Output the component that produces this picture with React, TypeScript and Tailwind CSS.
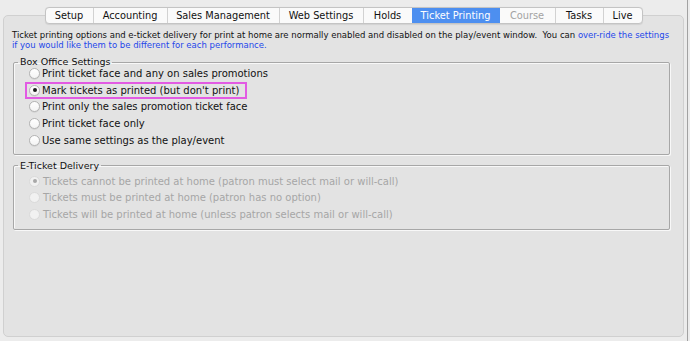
import React from 'react';

const tabs: { label: string; w: string; active?: boolean; disabled?: boolean }[] = [
  { label: 'Setup', w: 'w-[47px]' },
  { label: 'Accounting', w: 'w-[74px]' },
  { label: 'Sales Management', w: 'w-[112px]' },
  { label: 'Web Settings', w: 'w-[84px]' },
  { label: 'Holds', w: 'w-[49px]' },
  { label: 'Ticket Printing', w: 'w-[88px]', active: true },
  { label: 'Course', w: 'w-[55px]', disabled: true },
  { label: 'Tasks', w: 'w-[48px]' },
  { label: 'Live', w: 'w-[39px]' },
];

const boxOffice = [
  'Print ticket face and any on sales promotions',
  "Mark tickets as printed (but don't print)",
  'Print only the sales promotion ticket face',
  'Print ticket face only',
  'Use same settings as the play/event',
];

const delivery = [
  'Tickets cannot be printed at home (patron must select mail or will-call)',
  'Tickets must be printed at home (patron has no option)',
  'Tickets will be printed at home (unless patron selects mail or will-call)',
];

const Radio = ({ checked, disabled }: { checked?: boolean; disabled?: boolean }) => (
  <span
    className={
      'flex h-[11px] w-[11px] shrink-0 items-center justify-center rounded-full border ' +
      (disabled
        ? 'border-[#dadada] bg-[#f1f1f1]'
        : 'border-[#b4b4b4] bg-gradient-to-b from-white to-[#f4f4f4] shadow-[0_0.5px_0.5px_rgba(0,0,0,0.12)]')
    }
  >
    {checked && (
      <span className={'h-[4px] w-[4px] rounded-full ' + (disabled ? 'bg-[#a8a8a8]' : 'bg-[#1a1a1a]')} />
    )}
  </span>
);

export default function App() {
  return (
    <div className="relative flex h-[341px] w-[690px] overflow-hidden bg-[#ececec] font-['DejaVu_Sans',sans-serif] text-[#111]">
      <div className="flex w-[684px] flex-col pl-[3px] pt-[7px]">
        {/* segmented tab bar */}
        <div className="relative z-10 flex h-[17px] justify-center">
          <div className="flex rounded-[4px] border border-[#c4c4c4] bg-[#fafafa] shadow-[0_0.5px_1px_rgba(0,0,0,0.08)]">
            {tabs.map((t, i) => (
              <div
                key={t.label}
                className={
                  'flex items-center justify-center text-[9.8px] leading-none ' +
                  t.w +
                  (i > 0 && !t.active && !tabs[i - 1].active ? ' border-l border-[#d2d2d2]' : '') +
                  (t.active ? ' bg-[#4d8ff0] text-white' : t.disabled ? ' text-[#a3a3a3]' : ' text-[#111]')
                }
              >
                {t.label}
              </div>
            ))}
          </div>
        </div>

        {/* tab content panel */}
        <div className="-mt-[9px] flex h-[322px] w-[681px] flex-col rounded-[5px] border border-[#d0d0d0] bg-[#e3e3e3] pl-[8px] pt-[14px]">
          <p className="text-[8.5px] leading-[10px]">
            Ticket printing options and e-ticket delivery for print at home are normally enabled and disabled on the
            play/event window.&nbsp; You can <span className="text-[#1f48ea]">over-ride the settings</span>
            <br />
            <span className="text-[#1f48ea]">if you would like them to be different for each performance.</span>
          </p>

          <fieldset className="mt-[7px] ml-[1px] w-[657px] rounded-[2px] border border-[#a7a7a7] pb-[5px] shadow-[inset_1px_1px_0_#f8f8f8,1px_1px_0_#f8f8f8]">
            <legend className="ml-[4px] px-[2px] text-[9.5px] leading-[10px]">Box Office Settings</legend>
            <div className="-mt-[2px] flex flex-col">
              {boxOffice.map((label, i) => (
                <div key={label} className="relative flex h-[16.75px] items-center gap-[2px] pl-[15px] text-[10px]">
                  <Radio checked={i === 1} />
                  <span>{label}</span>
                  {i === 1 && (
                    <span className="pointer-events-none absolute left-[11px] top-0 h-[17px] w-[222px] border-2 border-[#e25be3]" />
                  )}
                </div>
              ))}
            </div>
          </fieldset>

          <fieldset className="mt-[6px] ml-[1px] w-[657px] rounded-[2px] border border-[#a7a7a7] pb-[6px] shadow-[inset_1px_1px_0_#f8f8f8,1px_1px_0_#f8f8f8]">
            <legend className="ml-[4px] px-[2px] text-[9.5px] leading-[10px]">E-Ticket Delivery</legend>
            <div className="mt-[2px] flex flex-col">
              {delivery.map((label, i) => (
                <div key={label} className="flex h-[16.7px] items-center gap-[3px] pl-[15px] text-[10px] text-[#a6a6a6]">
                  <Radio checked={i === 0} disabled />
                  <span>{label}</span>
                </div>
              ))}
            </div>
          </fieldset>
        </div>
      </div>
      <div className="ml-[3px] h-full w-[1px] bg-[#a2a2a2]" />
    </div>
  );
}
